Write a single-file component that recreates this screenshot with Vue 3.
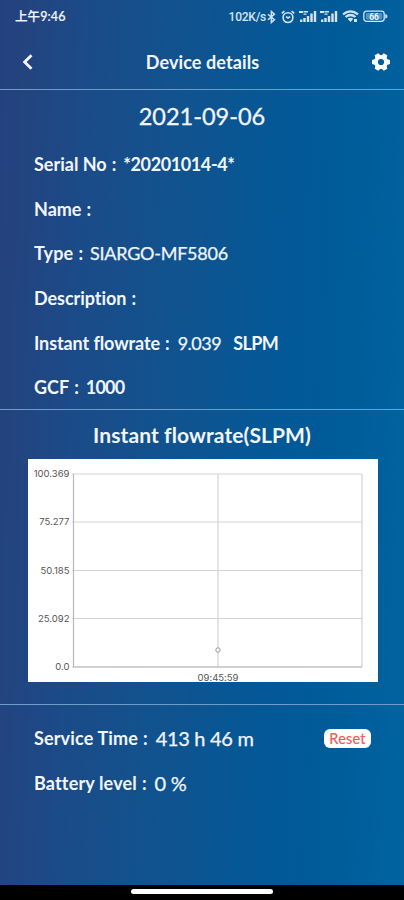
<script setup>
const date = '2021-09-06'

const details = [
  { id: 'serial', label: 'Serial No', value: '*20201014-4*', strong: true },
  { id: 'name', label: 'Name', value: '' },
  { id: 'type', label: 'Type', value: 'SIARGO-MF5806' },
  { id: 'description', label: 'Description', value: '' },
  { id: 'flow', label: 'Instant flowrate', value: '9.039', unit: 'SLPM' },
  { id: 'gcf', label: 'GCF', value: '1000', strong: true },
]

const ticks = [
  { label: '100.369', y: 15 },
  { label: '75.277', y: 63 },
  { label: '50.185', y: 111.5 },
  { label: '25.092', y: 159.5 },
  { label: '0.0', y: 208 },
]

// gear teeth, one every 60 degrees
const teeth = [0, 60, 120, 180, 240, 300]
</script>

<template>
  <main class="screen">
    <div class="status">
      <span class="status__time">上午9:46</span>
      <div class="status__icons">
        <span class="status__speed">102K/s</span>
        <svg width="9" height="14" viewBox="0 0 9 14">
          <path d="M1 4.2 7.4 9.8 4.4 12.5V1.5L7.4 4.2 1 9.8" fill="none" stroke="currentColor" stroke-width="1.5" />
        </svg>
        <svg class="status__alarm" width="14" height="14" viewBox="0 0 14 14" fill="none" stroke="currentColor" stroke-width="1.6">
          <circle cx="7" cy="7.6" r="4.9" />
          <path d="M.8 3.4 3.4 1.2M13.2 3.4 10.6 1.2M5 6.6l2 1.4 2.2-1.4" />
        </svg>
        <svg v-for="n in 2" :key="n" class="status__signal" width="18" height="13" viewBox="0 0 18 13" fill="currentColor">
          <path d="M0 1h4v2H0zM4.5 1H9v1.4H4.5zM4.5 3.4h3v1.4h-3zM1 9.5h2.4V12H1zM4.3 8h2.4v4H4.3zM7.8 6h2.4v6H7.8zM11.3 3.5h2.4V12h-2.4zM14.8 1h2.4v11h-2.4z" />
        </svg>
        <svg class="status__wifi" width="17" height="13" viewBox="0 0 17 13">
          <path d="M1 4.3Q8.5-1.4 16 4.3M3.5 7Q8.5 3 13.5 7" fill="none" stroke="currentColor" stroke-width="2.2" />
          <path d="M5.6 8.7q2.9-2.1 5.8 0L8.5 12zM12 9h3v3h-3z" fill="currentColor" />
        </svg>
        <svg class="status__battery" width="25" height="13" viewBox="0 0 25 13">
          <rect x=".8" y="1.2" width="20.4" height="10.2" rx="2.8" fill="none" stroke="currentColor" stroke-width="1.3" />
          <rect x="2.8" y="3" width="16.4" height="6.6" rx="1" fill="currentColor" opacity=".4" />
          <path d="M22.3 3.8v5l2-1.4V5.2z" fill="currentColor" />
          <text x="11" y="9.5" text-anchor="middle" class="status__percent">66</text>
        </svg>
      </div>
    </div>

    <header class="nav">
      <svg class="nav__back" width="12" height="16" viewBox="0 0 12 16">
        <path d="M9.5 1.2 2.6 8l6.9 6.8" fill="none" stroke="currentColor" stroke-width="2.8" />
      </svg>
      <h1>Device details</h1>
      <svg class="nav__gear" width="20" height="20" viewBox="-10 -10 20 20">
        <circle r="5" fill="none" stroke="currentColor" stroke-width="3.8" />
        <path v-for="angle in teeth" :key="angle" d="M5.6-3 9-2.1V2.1L5.6 3z" fill="currentColor" :transform="`rotate(${angle})`" />
      </svg>
    </header>

    <section class="details">
      <h2 class="details__date">{{ date }}</h2>
      <div v-for="row in details" :key="row.id" class="row" :class="`row--${row.id}`">
        <span class="row__label">{{ row.label }}</span>
        <span class="row__colon">:</span>
        <span v-if="row.value" class="row__value" :class="{ 'row__value--strong': row.strong }">{{ row.value }}</span>
        <span v-if="row.unit" class="row__unit">{{ row.unit }}</span>
      </div>
    </section>

    <section class="flow">
      <h2 class="flow__title">Instant flowrate(SLPM)</h2>
      <svg class="chart" width="350" height="223" viewBox="0 0 350 223">
        <g class="chart__grid">
          <line v-for="tick in ticks" :key="tick.label" x1="44" x2="334" :y1="tick.y" :y2="tick.y" />
          <line x1="190" x2="190" y1="15" y2="208" />
          <line x1="334" x2="334" y1="15" y2="208" />
        </g>
        <path class="chart__axis" d="M45.5 15V208H334" />
        <text v-for="tick in ticks" :key="tick.label" x="41.5" :y="tick.y + 3" text-anchor="end">{{ tick.label }}</text>
        <text x="190" y="222" text-anchor="middle">09:45:59</text>
        <circle cx="190" cy="191" r="2.2" />
      </svg>
    </section>

    <section class="service">
      <div class="row row--time">
        <span class="row__label">Service Time</span>
        <span class="row__colon">:</span>
        <span class="row__value">413 h 46 m</span>
        <button type="button" class="reset">Reset</button>
      </div>
      <div class="row row--battery">
        <span class="row__label">Battery level</span>
        <span class="row__colon">:</span>
        <span class="row__value">0 %</span>
      </div>
    </section>

    <footer class="home">
      <div class="home__bar"></div>
    </footer>
  </main>
</template>

<style>
body {
  margin: 0;
}
</style>

<style scoped>
.screen {
  background: linear-gradient(92deg, #24417f 0%, #23447f 6%, #1b4b88 20%, #10538f 43%, #045896 65%, #005c9a 83%, #0064a0 100%);
  color: #f2f6ff;
  display: flex;
  flex-direction: column;
  font-family: Lato, "Noto Sans CJK SC", sans-serif;
  font-variant-ligatures: none;
  height: 900px;
  overflow: hidden;
  width: 404px;
}

.status {
  align-items: center;
  box-sizing: border-box;
  display: flex;
  flex: none;
  height: 33px;
  justify-content: space-between;
  padding: 0 16px 0 15px;
}

.status__time {
  -webkit-text-stroke: 0.2px currentColor;
  font-size: 12.5px;
  font-weight: 500;
  letter-spacing: 0.1px;
  line-height: 16px;
}

.status__icons {
  align-items: center;
  color: #d5e5f7;
  display: flex;
}

.status__speed {
  font-family: Roboto, sans-serif;
  font-size: 12px;
  font-weight: 500;
  letter-spacing: -0.25px;
  margin-right: 1px;
}

.status__alarm {
  margin-left: 5px;
}

.status__signal {
  margin-left: 3px;
}

.status__alarm + .status__signal {
  margin-left: 4px;
}

.status__wifi {
  margin-left: 4px;
}

.status__battery {
  margin-left: 4px;
}

.status__percent {
  fill: #fff;
  font-family: Roboto, sans-serif;
  font-size: 8.5px;
  font-weight: 500;
}

.nav {
  align-items: center;
  border-bottom: 1.5px solid #6f9dca;
  box-sizing: border-box;
  display: flex;
  flex: none;
  height: 57px;
  justify-content: space-between;
  padding: 1px 13px 0 22px;
}

.nav h1 {
  font-size: 18px;
  font-weight: 700;
  letter-spacing: 0.1px;
  line-height: 24px;
  margin: 1px 0 0;
}

.nav__gear {
  color: #fff;
}

.details {
  border-bottom: 1.5px solid #6f9dca;
  box-sizing: border-box;
  flex: none;
  height: 320px;
  padding-top: 10px;
}

.details__date {
  -webkit-text-stroke: 0.3px currentColor;
  font-size: 23.5px;
  font-weight: 400;
  line-height: 32px;
  margin: 0 0 10px;
  text-align: center;
}

.row {
  align-items: center;
  display: flex;
  height: 44.6px;
  padding-left: 34px;
  white-space: pre;
}

.row__label,
.row__unit,
.row__value--strong {
  font-size: 18px;
  font-weight: 700;
}

.row__colon {
  font-size: 18px;
  font-weight: 700;
  margin: 0 7px 0 5px;
}

.row__value {
  -webkit-text-stroke: 0.25px currentColor;
  font-size: 18px;
}

.row__value--strong {
  -webkit-text-stroke: 0;
  letter-spacing: -0.4px;
}

.row__unit {
  font-size: 18px;
  letter-spacing: -0.6px;
  margin-left: 12px;
}

.row--type .row__label {
  letter-spacing: 0.2px;
}

.row--type .row__value {
  letter-spacing: -0.25px;
}

.row--description .row__label {
  letter-spacing: -0.05px;
}

.row--flow .row__label {
  letter-spacing: -0.1px;
}

.row--flow .row__value {
  letter-spacing: -0.5px;
  margin-left: 1px;
}

.row--gcf .row__value {
  letter-spacing: -0.8px;
}

.flow {
  border-bottom: 1.5px solid #6f9dca;
  box-sizing: border-box;
  flex: none;
  height: 295px;
}

.flow__title {
  font-size: 21px;
  font-weight: 700;
  letter-spacing: 0.1px;
  line-height: 30px;
  margin: 10px 0 9px;
  text-align: center;
}

.chart {
  background: #fff;
  display: block;
  margin-left: 28px;
}

.chart__grid line {
  stroke: #d3d3d3;
  stroke-width: 1.2;
}

.chart__axis {
  fill: none;
  stroke: #b8b8b8;
  stroke-width: 1.2;
}

.chart text {
  fill: #555;
  font-family: Inter, sans-serif;
  font-size: 9.5px;
}

.chart circle {
  fill: #fff;
  stroke: #999;
}

.service {
  flex: 1;
  padding-top: 11px;
}

.service .row__label {
  letter-spacing: 0.15px;
}

.service .row__value {
  font-size: 20px;
  letter-spacing: -0.3px;
  margin-left: 1px;
}

.reset {
  -webkit-text-stroke: 0.2px currentColor;
  background: #fff;
  border: 0;
  border-radius: 6px;
  color: #ee5a5c;
  font-family: Lato, sans-serif;
  font-size: 14.5px;
  height: 19px;
  letter-spacing: 0.2px;
  line-height: 19px;
  margin-left: auto;
  margin-right: 33px;
  padding: 0;
  width: 47px;
}

.home {
  background: #000;
  display: flex;
  flex: none;
  height: 15.5px;
}

.home__bar {
  background: #fff;
  border-radius: 3px;
  height: 5px;
  margin: 4px auto 0 131px;
  width: 142px;
}
</style>
